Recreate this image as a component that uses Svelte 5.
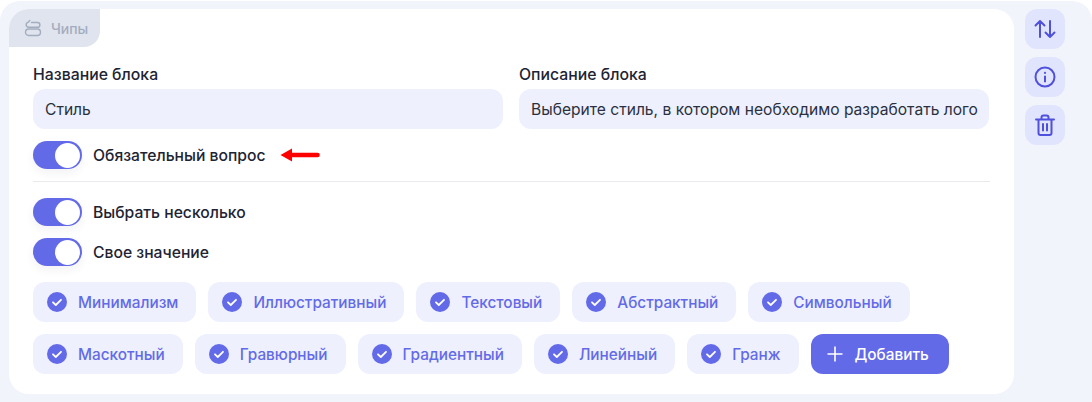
<script>
  const rows = [
    ['Минимализм', 'Иллюстративный', 'Текстовый', 'Абстрактный', 'Символьный'],
    ['Маскотный', 'Гравюрный', 'Градиентный', 'Линейный', 'Гранж']
  ];
</script>

{#snippet toggle(label)}
  <div class="toggle-row">
    <span class="toggle"><span class="knob"></span></span>
    <span class="toggle-label">{label}</span>
    {#if label === 'Обязательный вопрос'}
      <svg class="arrow" width="40" height="14" viewBox="0 0 40 14"><path d="M0.500 7 L12 0.500 V4.700 H37.500 a2.300 2.300 0 0 1 0 4.600 H12 V13.500 Z" fill="#f00" /></svg>
    {/if}
  </div>
{/snippet}

<div class="panel">
  <div class="card">
    <div class="tab">
      <svg width="18" height="18" viewBox="0 0 18 18" fill="none" stroke="#a3adbf" stroke-width="1.400" stroke-linecap="round">
        <rect x="1.500" y="10" width="15" height="6.500" rx="3.200" />
        <path d="M7.500 3.500H13.500a2.400 2.400 0 0 1 0 4.800H4.800A2.500 2.500 0 0 1 4 3.400L5.800 1.600" />
      </svg>
      <span>Чипы</span>
    </div>
    <div class="body">
      <div class="fields">
        <div class="field">
          <div class="field-label">Название блока</div>
          <div class="input">Стиль</div>
        </div>
        <div class="field">
          <div class="field-label">Описание блока</div>
          <div class="input">Выберите стиль, в котором необходимо разработать лого</div>
        </div>
      </div>
      {@render toggle('Обязательный вопрос')}
      <div class="divider"></div>
      <div class="toggles">
        {@render toggle('Выбрать несколько')}
        {@render toggle('Свое значение')}
      </div>
      <div class="chips">
        {#each rows as row, r}
          <div class="chip-row">
            {#each row as chip}
              <div class="chip">
                <svg width="20" height="20" viewBox="0 0 20 20">
                  <circle cx="10" cy="10" r="10" fill="#636ae8" />
                  <path d="M6 10.300 L8.800 13 L14 7.800" fill="none" stroke="#fff" stroke-width="1.800" stroke-linecap="round" stroke-linejoin="round" />
                </svg>
                <span>{chip}</span>
              </div>
            {/each}
            {#if r === 1}
              <div class="add">
                <svg width="16" height="16" viewBox="0 0 16 16"><path d="M8 0.500V15.500M0.500 8H15.500" stroke="#fff" stroke-width="1.600" /></svg>
                <span>Добавить</span>
              </div>
            {/if}
          </div>
        {/each}
      </div>
    </div>
  </div>

  <div class="side">
    <div class="side-btn">
      <svg width="24" height="24" viewBox="0 0 24 24" fill="none" stroke="#4f50dc" stroke-width="2" stroke-linecap="round" stroke-linejoin="round">
        <path d="M7 20V4M2.500 8.500 7 4l4.500 4.500M17 4v16M12.500 15.500 17 20l4.500-4.500" />
      </svg>
    </div>
    <div class="side-btn">
      <svg width="24" height="24" viewBox="0 0 24 24" fill="none" stroke="#4f50dc" stroke-width="2" stroke-linecap="round">
        <circle cx="12" cy="12" r="9.500" />
        <path d="M12 11.500V16.500M12 7.800V8" />
      </svg>
    </div>
    <div class="side-btn">
      <svg width="24" height="24" viewBox="0 0 24 24" fill="none" stroke="#4f50dc" stroke-width="2" stroke-linecap="round" stroke-linejoin="round">
        <path d="M3 6.500H21M8.500 6.500V4.500A2 2 0 0 1 10.500 2.500H13.500A2 2 0 0 1 15.500 4.500V6.500M5.500 6.500V20A2 2 0 0 0 7.500 22H16.500A2 2 0 0 0 18.500 20V6.500M10 11V17.500M14 11V17.500" />
      </svg>
    </div>
  </div>
</div>

<style>
  :global(body) {
    background: #fff;
  }

  .panel {
    margin-top: 1px;
    height: 401px;
    box-sizing: border-box;
    background: #f1f4fb;
    border-radius: 20px 20px 0 0;
    padding: 8px 0 0 9px;
    display: flex;
    gap: 11px;
    font-family: Inter, "Noto Sans", sans-serif;
  }

  .card {
    width: 1005px;
    height: 385px;
    background: #fff;
    border-radius: 20px;
    overflow: hidden;
  }

  .tab {
    width: 91px;
    height: 38px;
    box-sizing: border-box;
    padding-left: 15px;
    display: flex;
    align-items: center;
    gap: 9px;
    background: #dfe4ee;
    border-bottom-right-radius: 16px;
    color: #a3adbf;
    font-size: 14px;
    font-weight: 500;
  }

  .body {
    padding: 18px 25px 0 24px;
  }

  .fields {
    display: flex;
    gap: 16px;
  }

  .field {
    flex: 1;
  }

  .field-label {
    height: 20px;
    margin-bottom: 4px;
    line-height: 20px;
    font-size: 15.800px;
    font-weight: 500;
    color: #1e2433;
  }

  .input {
    height: 40px;
    box-sizing: border-box;
    padding-left: 12px;
    display: flex;
    align-items: center;
    background: #eef0fd;
    border-radius: 12px;
    font-size: 15.600px;
    color: #2a3040;
    white-space: nowrap;
  }

  .toggle-row {
    display: flex;
    align-items: center;
    height: 28px;
    margin-top: 12px;
  }

  .toggle {
    width: 49px;
    height: 28px;
    box-sizing: border-box;
    padding: 1.500px 2px;
    display: flex;
    justify-content: flex-end;
    background: #636ae8;
    border-radius: 14px;
    box-shadow: 0 4px 10px rgba(40, 40, 60, 0.06);
  }

  .knob {
    width: 25px;
    height: 25px;
    background: #fff;
    border-radius: 50%;
  }

  .toggle-label {
    margin-left: 11px;
    font-size: 15.700px;
    font-weight: 500;
    color: #1e2433;
  }

  .arrow {
    margin-left: 14px;
  }

  .divider {
    height: 1px;
    margin-top: 12px;
    background: #e8eaee;
    width: 957px;
  }

  .toggles {
    margin-top: 4px;
  }

  .toggles .toggle-row:first-child {
    margin-top: 16px;
  }

  .chips {
    margin-top: 16px;
    display: flex;
    flex-direction: column;
    gap: 12px;
  }

  .chip-row {
    display: flex;
    gap: 12px;
  }

  .chip, .add {
    height: 40px;
    box-sizing: border-box;
    display: flex;
    align-items: center;
    border-radius: 12px;
    font-size: 15.350px;
    font-weight: 500;
  }

  .chip {
    padding: 0 18px 0 14px;
    gap: 11px;
    background: #eef0fd;
    color: #636ae8;
  }

  .add {
    padding: 0 20px 0 16px;
    gap: 12px;
    background: #636ae8;
    color: #fff;
  }

  .side {
    display: flex;
    flex-direction: column;
    gap: 8px;
  }

  .side-btn {
    width: 40px;
    height: 40px;
    display: flex;
    align-items: center;
    justify-content: center;
    background: #e1e4fd;
    border-radius: 12px;
  }
</style>
